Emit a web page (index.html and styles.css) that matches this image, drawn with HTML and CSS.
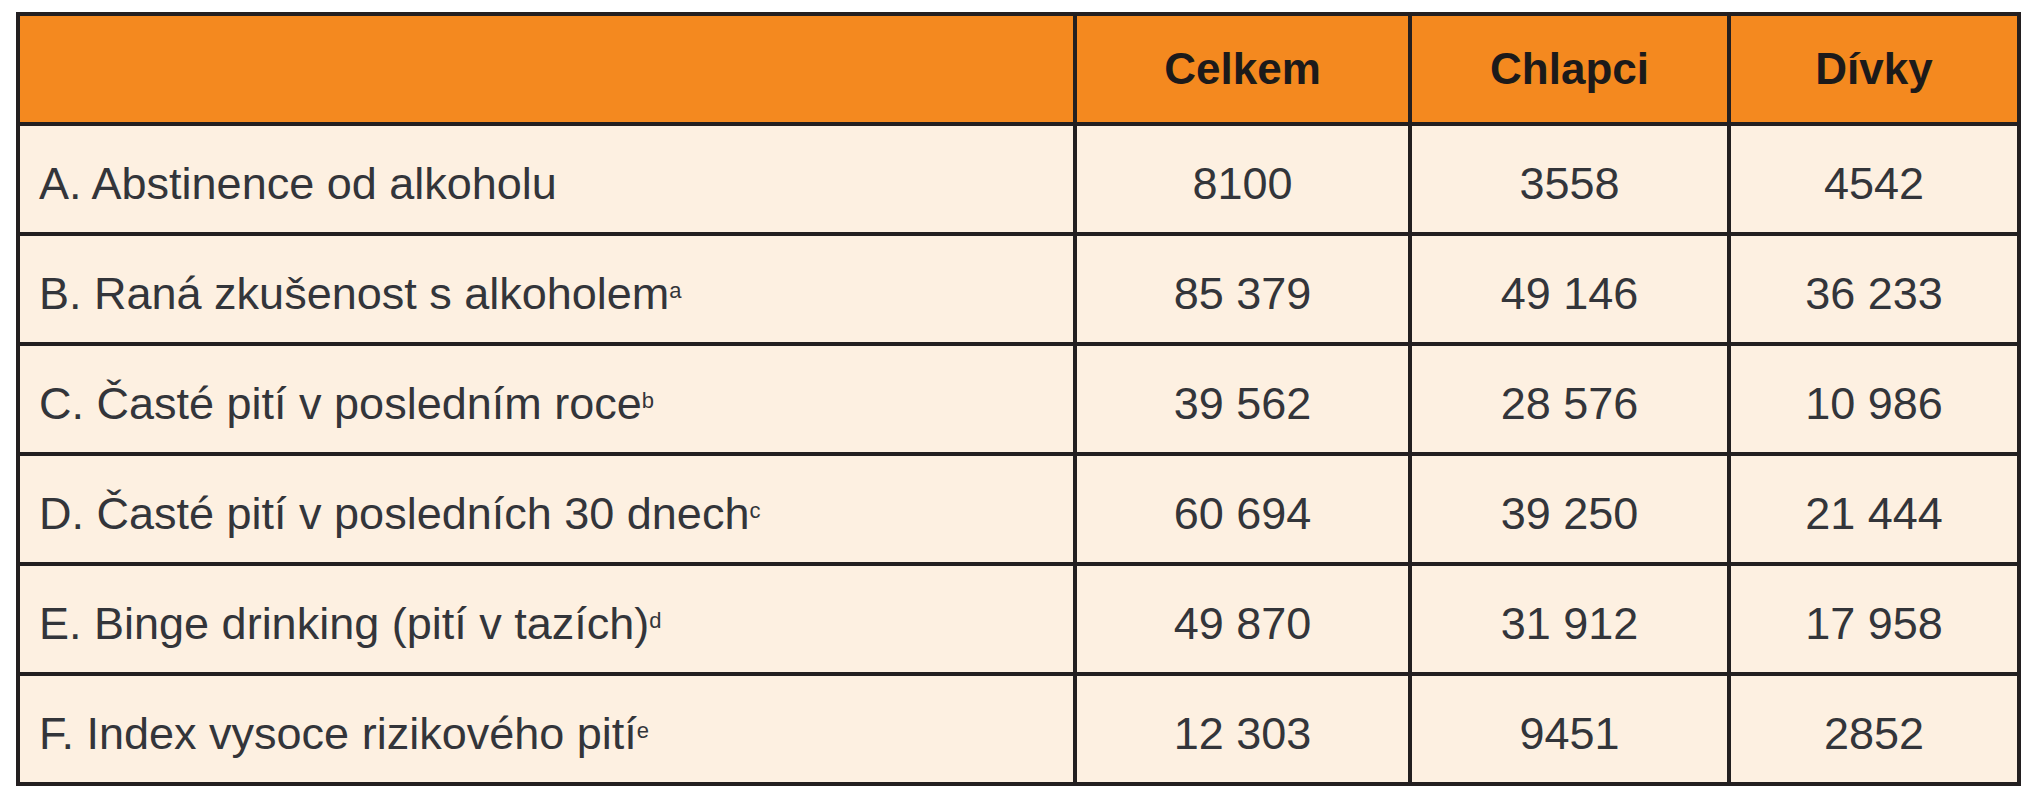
FILE: index.html
```html
<!DOCTYPE html>
<html lang="cs">
<head>
<meta charset="utf-8">
<title>Tabulka</title>
<link rel="stylesheet" href="styles.css">
</head>
<body>
<div class="wrap">
<table class="data">
  <colgroup>
    <col class="c-label">
    <col class="c-total">
    <col class="c-boys">
    <col class="c-girls">
  </colgroup>
  <thead>
    <tr>
      <th class="label"></th>
      <th>Celkem</th>
      <th>Chlapci</th>
      <th>Dívky</th>
    </tr>
  </thead>
  <tbody>
    <tr><td class="label">A. Abstinence od alkoholu</td><td>8100</td><td>3558</td><td>4542</td></tr>
    <tr><td class="label">B. Raná zkušenost s alkoholem<sup class="note">a</sup></td><td>85 379</td><td>49 146</td><td>36 233</td></tr>
    <tr><td class="label">C. Časté pití v posledním roce<sup class="note">b</sup></td><td>39 562</td><td>28 576</td><td>10 986</td></tr>
    <tr><td class="label">D. Časté pití v posledních 30 dnech<sup class="note">c</sup></td><td>60 694</td><td>39 250</td><td>21 444</td></tr>
    <tr><td class="label">E. Binge drinking (pití v tazích)<sup class="note">d</sup></td><td>49 870</td><td>31 912</td><td>17 958</td></tr>
    <tr><td class="label">F. Index vysoce rizikového pití<sup class="note">e</sup></td><td>12 303</td><td>9451</td><td>2852</td></tr>
  </tbody>
</table>
</div>
</body>
</html>
```
FILE: styles.css
```css
html, body {
  margin: 0;
  padding: 0;
  background: #ffffff;
}

.wrap {
  padding: 12px 0 0 16px;
}

.data {
  border-collapse: separate;
  border-spacing: 0;
  border-top: 4px solid #231f20;
  border-left: 4px solid #231f20;
  table-layout: fixed;
  width: 2005px;
  font-family: "Liberation Sans", Arial, sans-serif;
}

.c-label { width: 1057px; }
.c-total { width: 335px; }
.c-boys  { width: 319px; }
.c-girls { width: 290px; }

.data th,
.data td {
  border-right: 4px solid #231f20;
  border-bottom: 4px solid #231f20;
  text-align: center;
  vertical-align: middle;
  padding: 0;
  white-space: nowrap;
}

.data th {
  height: 106px;
  background: #f4891f;
  color: #1c1a1a;
  font-weight: bold;
  font-size: 44px;
}

.data td {
  height: 96px;
  padding-top: 10px;
  background: #fdf0e1;
  color: #33353a;
  font-size: 45px;
}

.data td.label {
  text-align: left;
  padding-left: 19px;
}

.note {
  font-size: 22px;
  vertical-align: 11px;
  line-height: 0;
}
```
